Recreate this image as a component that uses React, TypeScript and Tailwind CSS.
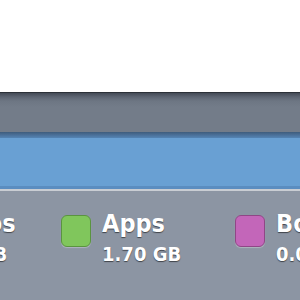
const items = [
  { label: "Photos", value: "2.15 GB", color: "bg-[#e3b84f]", border: "border-[#a8862e]" },
  { label: "Apps", value: "1.70 GB", color: "bg-[#80c65c]", border: "border-[#5a9440]" },
  { label: "Books", value: "0.02 GB", color: "bg-[#c366b9]", border: "border-[#8f4786]" },
]

export default function App() {
  return (
    <div className="h-[300px] w-[300px] overflow-hidden bg-[#8c95a3] [font-family:'DejaVu_Sans',sans-serif]">
      <div className="h-[92px] bg-white" />
      <div className="h-px bg-[#2c3138]" />
      <div className="h-[39px] bg-[linear-gradient(180deg,#444b56_0px,#5d6572_4px,#6d7683_8px,#737c89_14px,#737c89_100%)]" />
      <div className="h-[6px] bg-[linear-gradient(180deg,#3f5c7c,#5584b4)]" />
      <div className="h-[48px] bg-[#69a0d3]" />
      <div className="h-[3px] bg-[#5b8dc0]" />
      <div className="h-[2px] bg-[#c9cdd3]" />
      <div className="ml-[-113px] flex pt-[24px]">
        {items.map((item) => (
          <div key={item.label} className="flex w-[174px] shrink-0 gap-[11px]">
            <div className={`h-[32px] w-[30px] shrink-0 rounded-[6px] border ${item.color} ${item.border} shadow-[0_1px_1px_rgba(255,255,255,0.3)]`} />
            <div className="flex flex-col text-white [font-stretch:condensed] [text-shadow:0_1px_1px_rgba(0,0,0,0.55)]">
              <span className="mt-[-4px] text-[25px] font-bold leading-[26px]">{item.label}</span>
              <span className="mt-[6px] text-[20px] font-bold leading-[22px]">{item.value}</span>
            </div>
          </div>
        ))}
      </div>
    </div>
  )
}
